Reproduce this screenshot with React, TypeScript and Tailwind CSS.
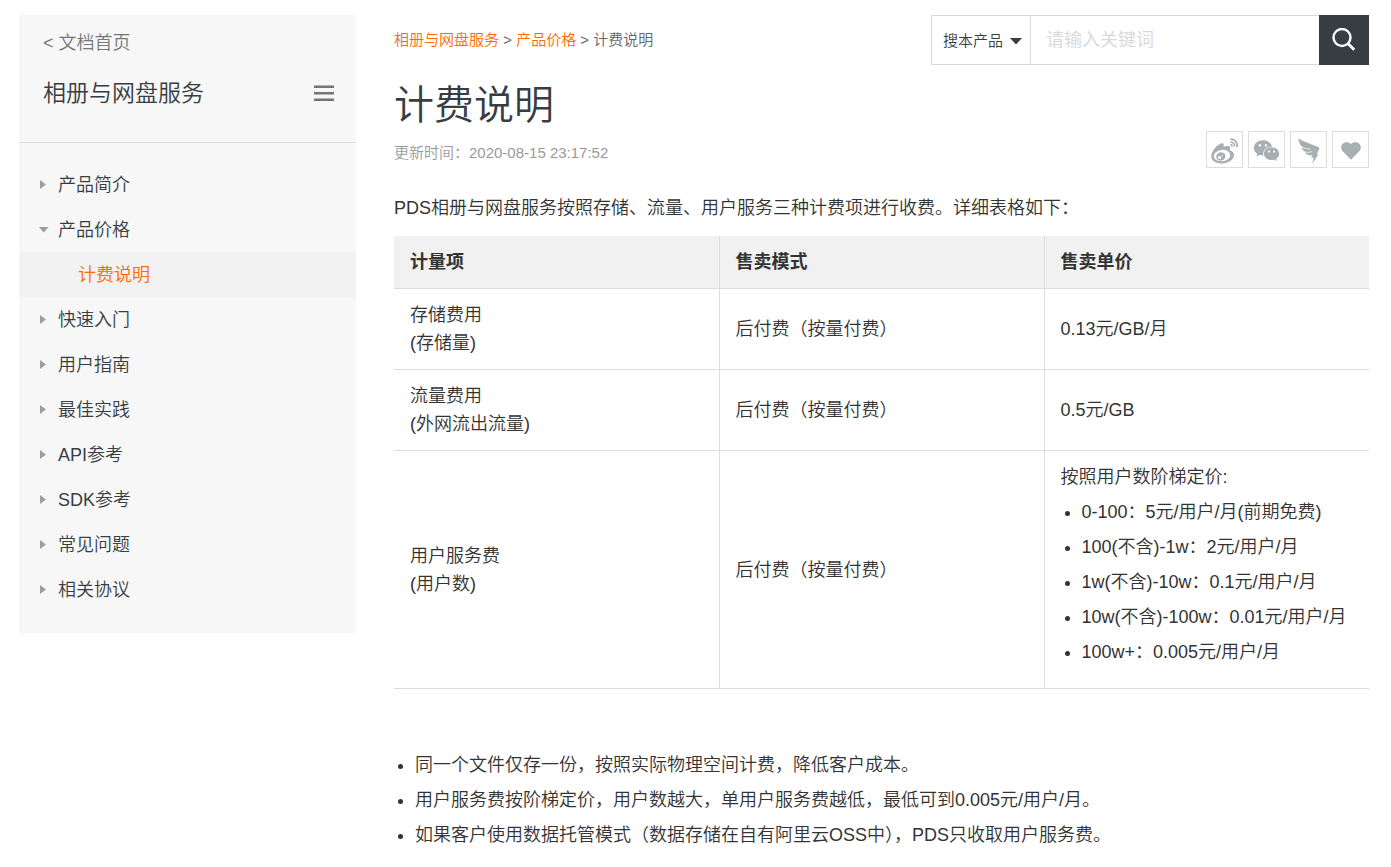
import React from 'react';
import { AiFillWechat } from 'react-icons/ai';

const menu = [
  { label: '产品简介' },
  { label: '产品价格', children: ['计费说明'] },
  { label: '快速入门' },
  { label: '用户指南' },
  { label: '最佳实践' },
  { label: 'API参考' },
  { label: 'SDK参考' },
  { label: '常见问题' },
  { label: '相关协议' },
];

const tiers = [
  '0-100：5元/用户/月(前期免费)',
  '100(不含)-1w：2元/用户/月',
  '1w(不含)-10w：0.1元/用户/月',
  '10w(不含)-100w：0.01元/用户/月',
  '100w+：0.005元/用户/月',
];

const notes = [
  '同一个文件仅存一份，按照实际物理空间计费，降低客户成本。',
  '用户服务费按阶梯定价，用户数越大，单用户服务费越低，最低可到0.005元/用户/月。',
  '如果客户使用数据托管模式（数据存储在自有阿里云OSS中），PDS只收取用户服务费。',
];

const rows = [
  { item: '存储费用', unit: '(存储量)', mode: '后付费（按量付费）', price: '0.13元/GB/月' },
  { item: '流量费用', unit: '(外网流出流量)', mode: '后付费（按量付费）', price: '0.5元/GB' },
  { item: '用户服务费', unit: '(用户数)', mode: '后付费（按量付费）', price: '按照用户数阶梯定价:', tiers },
];

function WeiboIcon() {
  return (
    <svg width="28" height="26" viewBox="0 0 28 26" fill="none" aria-hidden="true">
      <path
        fill="currentColor"
        d="M0.300 18C.5 13.500 5.500 7.500 9.600 5.600c2.600-1.200 3.900.4 3 3.200 2.500-1 6.800-1.700 6.600 1.200l-.5 2.300c2.500.7 4.300 2.200 4.300 4.700 0 4.700-5.800 8.500-12 8.500C4.800 25.500.1 22.700.3 18z" />
      <ellipse cx="11" cy="17.600" rx="8.300" ry="5.700" fill="#fff" transform="rotate(-6 11 17.600)" />
      <ellipse cx="9.800" cy="18.400" rx="4.700" ry="4.200" fill="currentColor" transform="rotate(-20 9.800 18.400)" />
      <ellipse cx="8.500" cy="19.600" rx="1.700" ry="1.500" fill="#fff" />
      <circle cx="11.300" cy="17.600" r="0.700" fill="#fff" />
      <path stroke="currentColor" strokeWidth="1.700" d="M19.300 1.200c4.300-.3 7.700 3.400 6.900 8M19.300 4c2.600-.2 4.700 2 4.200 4.700M19.300 6.700c1.200 0 1.900.8 1.700 2" />
    </svg>
  );
}

function DingtalkIcon() {
  return (
    <svg width="22" height="26" viewBox="0 0 22 26" fill="none" aria-hidden="true">
      <path
        fill="currentColor"
        d="M0.500 0.500C6.500 4 14 6.500 19.800 8.700c1.500.6 1.700 1.500 1.200 2.800-.5 1.600-1.400 3.200-2.300 4.800h1.800L14.300 25.800l1.200-6.300h-2.200l.7-2.500c-3 .6-5.900-.2-7-2.400l2.300-.3C6.300 13.700 4.300 12.200 3.500 9.700l2.200.1C3.300 8.300 1.800 6.800 1.400 4.800c-.7-1.200-1-2.800-.9-4.300z" />
      <path stroke="#fff" strokeWidth="0.700" d="M4.500 9.700c3 .8 5.400 1.200 8 1.300M8.500 14.400c2.200 0 3.800-.2 5.500-.8" />
    </svg>
  );
}

function HeartIcon() {
  return (
    <svg width="20" height="18" viewBox="0 0 20 18" fill="currentColor" aria-hidden="true">
      <path d="M10 2.200C11.200.8 12.800.2 14.600.2c3 0 5.200 2.400 5.200 5.300 0 1.600-.7 3-1.800 4.100L10 17.800 2 9.600C.9 8.500.2 7.100.2 5.500.2 2.600 2.400.2 5.400.2c1.800 0 3.400.6 4.600 2z" />
    </svg>
  );
}

const shares = [
  { label: '微博', icon: <WeiboIcon /> },
  { label: '微信', icon: <AiFillWechat size={29} /> },
  { label: '钉钉', icon: <DingtalkIcon /> },
  { label: '收藏', icon: <HeartIcon /> },
];

function Arrow({ open }: { open: boolean }) {
  return (
    <svg width="10" height="10" viewBox="0 0 10 10" fill="#9b9ea0" className="shrink-0" aria-hidden="true">
      {open ? <path d="M0 2h9.5L4.75 7.5z" /> : <path d="M1 0 7 4.5 1 9z" />}
    </svg>
  );
}

function Sidebar() {
  return (
    <aside className="w-[337px] shrink-0 bg-[#f7f7f7] text-lg text-[#373d41]">
      <div className="border-b border-[#ddd] px-6 pt-3.5 pb-8">
        <a href="#home" className="block leading-7 text-[#73777a]">&lt; 文档首页</a>
        <div className="mt-[19px] flex items-center justify-between">
          <h2 className="text-[23px] leading-[34px]">相册与网盘服务</h2>
          <button type="button" aria-label="目录" className="-mr-0.5 text-[#73777a]">
            <svg width="20" height="16" viewBox="0 0 20 16" fill="currentColor">
              <path d="M0 0.500h20v2.500H0zM0 7h20v2.500H0zM0 13.500h20v2.500H0z" />
            </svg>
          </button>
        </div>
      </div>
      <nav className="pt-[19px] pb-[21px]">
        <ul>
          {menu.map((entry) => (
            <li key={entry.label}>
              <a href="#doc" className="flex h-[45px] items-center gap-2 pl-5">
                <Arrow open={Boolean(entry.children)} />
                <span className="pl-px">{entry.label}</span>
              </a>
              {entry.children?.map((child) => (
                <a
                  key={child}
                  href="#pricing"
                  className="flex h-[45px] items-center bg-[#f2f2f2] pl-[59px] text-[#ff6a00]">
                  {child}
                </a>
              ))}
            </li>
          ))}
        </ul>
      </nav>
    </aside>
  );
}

function SearchBar() {
  return (
    <form className="flex h-[50px] w-[438px]" role="search">
      <div className="relative w-[100px] border border-[#d7d8d9]">
        <select
          aria-label="搜索范围"
          className="h-full w-full appearance-none bg-transparent pt-0.5 pl-[11px] text-[15px] text-[#373d41] outline-none">
          <option>搜本产品</option>
        </select>
        <svg
          width="12"
          height="7"
          viewBox="0 0 12 7"
          fill="#373d41"
          className="pointer-events-none absolute top-[22px] right-2"
          aria-hidden="true">
          <path d="M0 0h12L6 6.500z" />
        </svg>
      </div>
      <input
        type="text"
        aria-label="关键词"
        placeholder="请输入关键词"
        className="min-w-0 flex-1 border-y border-[#d7d8d9] px-[15px] text-lg outline-none placeholder:text-[#d7d8d9]" />
      <button type="button" aria-label="搜索" className="flex w-[50px] items-center justify-center bg-[#373d41]">
        <svg width="24" height="24" viewBox="0 0 24 24" fill="none" stroke="#fff" strokeWidth="2.4">
          <circle cx="10" cy="9.500" r="8.500" />
          <path d="m16.200 15.700 6 6" strokeWidth="2.800" />
        </svg>
      </button>
    </form>
  );
}

function PriceTable() {
  return (
    <table className="mt-3.5 w-full table-fixed border-collapse text-left">
      <thead>
        <tr className="border-b border-[#ddd] bg-[#f1f1f1]">
          {['计量项', '售卖模式', '售卖单价'].map((head) => (
            <th key={head} className="border-r border-[#ddd] px-4 py-3 font-bold last:border-r-0">{head}</th>
          ))}
        </tr>
      </thead>
      <tbody>
        {rows.map((row) => (
          <tr key={row.item} className="border-b border-[#ddd]">
            <td className="border-r border-[#ddd] px-4 py-3">
              {row.item}
              <br />
              {row.unit}
            </td>
            <td className="border-r border-[#ddd] px-4 py-3">{row.mode}</td>
            <td className="px-4 py-3">
              {row.price}
              {row.tiers && (
                <ul className="mb-2.5 list-disc pl-[21px]">
                  {row.tiers.map((tier) => (
                    <li key={tier} className="mt-[7px]">{tier}</li>
                  ))}
                </ul>
              )}
            </td>
          </tr>
        ))}
      </tbody>
    </table>
  );
}

export default function App() {
  return (
    <div
      lang="zh-CN"
      className="flex items-start gap-[38px] bg-white pt-[15px] pr-[22px] pl-[19px] font-['Liberation_Sans','Noto_Sans_CJK_SC',sans-serif] font-[350]">
      <Sidebar />

      <main className="min-w-0 flex-1 text-lg leading-7 text-[#333]">
        <div className="flex items-center justify-between">
          <nav className="text-[15px] text-[#666]">
            <a href="#product" className="text-[#ff6a00]">相册与网盘服务</a>
            {' > '}
            <a href="#price" className="text-[#ff6a00]">产品价格</a>
            {' > '}
            <span>计费说明</span>
          </nav>
          <SearchBar />
        </div>

        <div className="mt-2.5 flex items-end justify-between">
          <div>
            <h1 className="text-[40px] leading-[60px] text-[#373d41]">计费说明</h1>
            <p className="pt-2 pb-[5px] text-[15px] leading-5 text-[#999]">更新时间：2020-08-15 23:17:52</p>
          </div>
          <div className="flex gap-[5px]">
            {shares.map((share) => (
              <button
                key={share.label}
                type="button"
                aria-label={share.label}
                className="flex size-[37px] items-center justify-center border border-[#ddd] pt-0.5 text-[#a8afb3]">
                {share.icon}
              </button>
            ))}
          </div>
        </div>

        <p className="mt-[26px]">PDS相册与网盘服务按照存储、流量、用户服务三种计费项进行收费。详细表格如下：</p>

        <PriceTable />

        <ul className="mt-[62px] list-disc space-y-[7px] pl-[21px]">
          {notes.map((note) => (
            <li key={note}>{note}</li>
          ))}
        </ul>
      </main>
    </div>
  );
}
